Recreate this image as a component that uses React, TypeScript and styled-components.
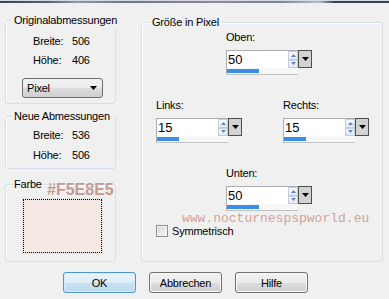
import React from 'react';
import styled, { createGlobalStyle } from 'styled-components';

const GlobalStyle = createGlobalStyle`
  html, body {
    margin: 0;
    padding: 0;
    background: #f0f0f0;
  }
  body {
    font-family: "Liberation Sans", Arial, sans-serif;
    font-size: 11px;
    letter-spacing: -0.2px;
    color: #000;
  }
`;

const Dialog = styled.div`
  width: 389px;
  height: 299px;
  overflow: hidden;
  background: #f0f0f0;
`;

// bottom edge of the title bar above the dialog
const TitleEdge = styled.div`
  height: 3px;
  background:
    linear-gradient(to bottom, #d4d8de 0 1px, transparent 1px 3px),
    linear-gradient(90deg, #3b4351 0%, #57606f 12%, #8d99ab 20%, #6c7687 32%, #8f879d 55%, #7d8496 72%, #a9c0d6 82%, #3b4351 86%, #3a414e 100%);
`;

const Main = styled.div`
  display: flex;
  align-items: flex-start;
  padding-left: 5px;
`;

const LeftColumn = styled.div`
  display: flex;
  flex-direction: column;
  width: 111px;
  margin-top: 17px;
`;

const GroupBox = styled.div<{ $mt?: number; $pb?: number }>`
  position: relative;
  box-sizing: border-box;
  border: 1px solid #d5dfe5;
  border-radius: 3px;
  box-shadow: inset 1px 1px 0 #fff;
  margin-top: ${p => p.$mt ?? 0}px;
  padding-bottom: ${p => p.$pb ?? 0}px;
`;

const SizeGroup = styled(GroupBox)`
  width: 242px;
  height: 240px;
  margin-left: 25px;
`;

const Legend = styled.div<{ $ml?: number }>`
  position: relative;
  width: fit-content;
  margin: -8px 0 0 ${p => p.$ml ?? 6}px;
  padding: 0 2px;
  background: #f0f0f0;
  line-height: 15px;
  white-space: nowrap;
`;

const InfoGrid = styled.div<{ $mt: number; $gap: number }>`
  display: grid;
  grid-template-columns: 39px auto;
  row-gap: ${p => p.$gap}px;
  line-height: 15px;
  padding-left: 27px;
  margin-top: ${p => p.$mt}px;
`;

const PixelSelect = styled.div`
  box-sizing: border-box;
  display: flex;
  align-items: center;
  justify-content: space-between;
  width: 81px;
  height: 20px;
  margin: 10px 0 5px 16px;
  padding: 0 5px 0 4px;
  border: 1px solid #707070;
  border-radius: 3px;
  background: linear-gradient(#f2f2f2, #ebebeb 50%, #dddddd 51%, #d0d0d0);
`;

const Swatch = styled.div<{ $color: string }>`
  box-sizing: border-box;
  width: 81px;
  height: 56px;
  margin: 6px 0 0 16px;
  border: 1px solid #e2e2e2;
  background: ${p => p.$color};
  outline: 1px dotted #000;
  outline-offset: -2px;
`;

// watermark text stamped over the Farbe frame
const ColorTag = styled.div`
  position: absolute;
  left: 41px;
  top: -3px;
  font-weight: bold;
  font-size: 16px;
  line-height: 16px;
  letter-spacing: 0;
  color: #c69a92;
`;

const FieldBlock = styled.div<{ $ml: number; $mt: number }>`
  display: flex;
  flex-direction: column;
  gap: 5px;
  margin-left: ${p => p.$ml}px;
  margin-top: ${p => p.$mt}px;
  line-height: 15px;
`;

const FieldRow = styled.div<{ $mt: number }>`
  display: flex;
  gap: 41px;
  padding-left: 14px;
  margin-top: ${p => p.$mt}px;
`;

const Spin = styled.div`
  display: grid;
  grid-template-columns: 62px 10px 14px;
  grid-template-rows: 18px 7px;
  width: 86px;
  height: 25px;
`;

const SpinEdit = styled.div`
  background: #fff;
  border-top: 1px solid #abadb3;
  border-left: 1px solid #abadb3;
  font-size: 13px;
  letter-spacing: 0;
  line-height: 17px;
  padding-left: 1px;
`;

const SpinArrows = styled.div`
  display: flex;
  flex-direction: column;
  background: #fff;
  border-top: 1px solid #abadb3;
`;

const ArrowBtn = styled.div`
  flex: 1;
  display: flex;
  align-items: center;
  justify-content: center;
  box-sizing: border-box;
  border: 1px solid #c5cddb;
  background: linear-gradient(#f7f9fc, #e3e9f3);
`;

const DropBtn = styled.div`
  display: flex;
  align-items: center;
  justify-content: center;
  box-sizing: border-box;
  border: 1px solid #4e4e4e;
  background: #d2d2d2;
`;

const BarTrack = styled.div`
  grid-column: 1 / span 2;
  box-sizing: border-box;
  border-left: 1px solid #abadb3;
  border-bottom: 1px solid #c2c2c2;
  padding-top: 1px;
  background: #f7f7f7;
`;

const Bar = styled.div`
  height: 4px;
  background: #3a8ee6;
`;

const Watermark = styled.div`
  margin-top: 1px;
  padding-left: 40px;
  font-family: "Liberation Mono", "Courier New", monospace;
  font-size: 13px;
  letter-spacing: 0;
  line-height: 13px;
  color: #d3a29b;
`;

const CheckRow = styled.label`
  display: flex;
  align-items: center;
  gap: 4px;
  padding-left: 14px;
  height: 12px;
  line-height: 12px;
`;

const CheckBox = styled.span`
  box-sizing: border-box;
  width: 12px;
  height: 12px;
  border: 1px solid #8e8f8f;
  box-shadow: inset 0 0 0 1px #f4f4f4;
  background: linear-gradient(135deg, #d4d4d4, #f6f6f6);
`;

const ButtonRow = styled.div`
  display: flex;
  gap: 13px;
  padding-left: 63px;
  margin-top: 10px;
`;

const Button = styled.button<{ $primary?: boolean }>`
  box-sizing: border-box;
  width: 73px;
  height: 21px;
  padding: 0;
  font-family: inherit;
  font-size: 11px;
  letter-spacing: -0.2px;
  color: #000;
  border-radius: 3px;
  border: 1px solid ${p => (p.$primary ? '#4d96cf' : '#707070')};
  background: ${p =>
    p.$primary
      ? 'linear-gradient(#eaf5fc, #dcedf8 50%, #c9e2f3 51%, #bcd9ee)'
      : 'linear-gradient(#f2f2f2, #ebebeb 50%, #dddddd 51%, #cfcfcf)'};
  box-shadow: inset 0 0 0 1px ${p => (p.$primary ? '#d6ecfa' : '#f8f8f8')};
`;

const DownTriangle = ({ color = '#000' }: { color?: string }) => (
  <svg width="7" height="4" viewBox="0 0 7 4">
    <path d="M0 0h7L3.5 4z" fill={color} />
  </svg>
);

const SmallArrow = ({ up }: { up?: boolean }) => (
  <svg width="5" height="3" viewBox="0 0 5 3">
    <path d={up ? 'M2.5 0L5 3H0z' : 'M0 0h5L2.5 3z'} fill="#6780c2" />
  </svg>
);

const SpinField = ({ value, fill }: { value: string; fill: number }) => (
  <Spin>
    <SpinEdit>{value}</SpinEdit>
    <SpinArrows>
      <ArrowBtn>
        <SmallArrow up />
      </ArrowBtn>
      <ArrowBtn>
        <SmallArrow />
      </ArrowBtn>
    </SpinArrows>
    <DropBtn>
      <DownTriangle />
    </DropBtn>
    <BarTrack>
      <Bar style={{ width: fill }} />
    </BarTrack>
  </Spin>
);

const SizeField = ({ label, value, fill }: { label: string; value: string; fill: number }) => (
  <FieldBlock $ml={0} $mt={0}>
    <span>{label}</span>
    <SpinField value={value} fill={fill} />
  </FieldBlock>
);

export default function App() {
  return (
    <Dialog>
      <GlobalStyle />
      <TitleEdge />
      <Main>
        <LeftColumn>
          <GroupBox>
            <Legend>Originalabmessungen</Legend>
            <InfoGrid $mt={6} $gap={4}>
              <span>Breite:</span>
              <span>506</span>
              <span>Höhe:</span>
              <span>406</span>
            </InfoGrid>
            <PixelSelect>
              <span>Pixel</span>
              <DownTriangle />
            </PixelSelect>
          </GroupBox>

          <GroupBox $mt={12} $pb={5}>
            <Legend>Neue Abmessungen</Legend>
            <InfoGrid $mt={4} $gap={5}>
              <span>Breite:</span>
              <span>536</span>
              <span>Höhe:</span>
              <span>506</span>
            </InfoGrid>
          </GroupBox>

          <GroupBox $mt={15} $pb={7}>
            <Legend>Farbe</Legend>
            <ColorTag>#F5E8E5</ColorTag>
            <Swatch $color="#f5e8e5" />
          </GroupBox>
        </LeftColumn>

        <SizeGroup $mt={19}>
          <Legend $ml={8}>Größe in Pixel</Legend>
          <FieldBlock $ml={84} $mt={0}>
            <span>Oben:</span>
            <SpinField value="50" fill={32} />
          </FieldBlock>
          <FieldRow $mt={23}>
            <SizeField label="Links:" value="15" fill={22} />
            <SizeField label="Rechts:" value="15" fill={22} />
          </FieldRow>
          <FieldBlock $ml={84} $mt={23}>
            <span>Unten:</span>
            <SpinField value="50" fill={32} />
          </FieldBlock>
          <Watermark>www.nocturnespspworld.eu</Watermark>
          <CheckRow>
            <CheckBox />
            <span>Symmetrisch</span>
          </CheckRow>
        </SizeGroup>
      </Main>

      <ButtonRow>
        <Button $primary>OK</Button>
        <Button>Abbrechen</Button>
        <Button>Hilfe</Button>
      </ButtonRow>
    </Dialog>
  );
}
